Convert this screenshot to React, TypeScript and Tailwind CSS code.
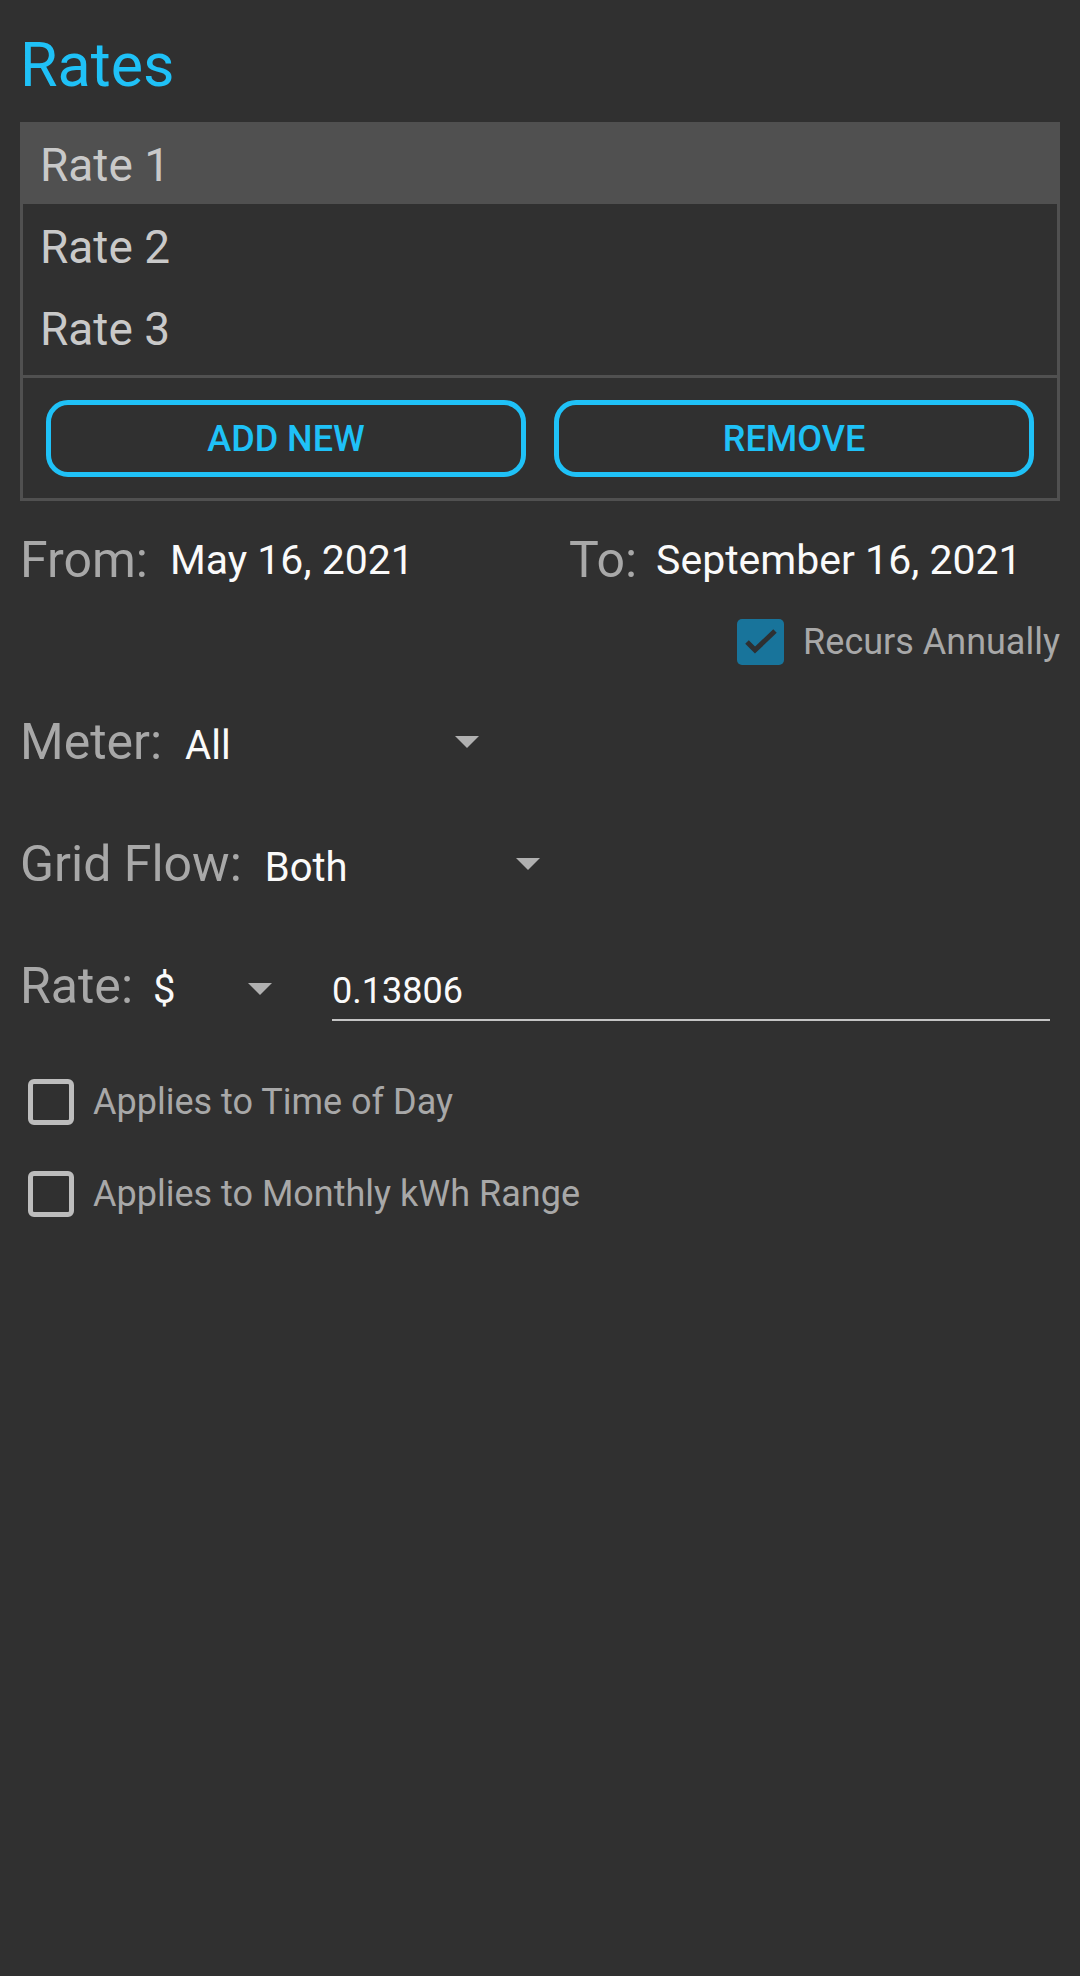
import React from "react";

const DropArrow = () => (
  <svg width="24" height="12" viewBox="0 0 24 12" className="shrink-0 self-center">
    <path d="M0 0 L24 0 L12 12 Z" fill="#b0b0b0" />
  </svg>
);

const CheckBox = ({ checked }: { checked: boolean }) => {
  if (checked) {
    return (
      <div className="flex h-[46px] w-[47px] shrink-0 items-center justify-center rounded-[5px] bg-[#18749b]">
        <svg width="47" height="46" viewBox="0 0 47 46">
          <polyline
            points="10,23 18,31 38,12"
            fill="none"
            stroke="#2e3032"
            strokeWidth="5"
          />
        </svg>
      </div>
    );
  }
  return (
    <div className="h-[46px] w-[46px] shrink-0 rounded-[6px] border-[5px] border-[#bdbdbd]" />
  );
};

const rates = ["Rate 1", "Rate 2", "Rate 3"];

export default function App() {
  return (
    <div className="flex h-[1976px] w-full flex-col bg-[#303030] px-[20px] font-['Roboto',sans-serif]">
      {/* title */}
      <div className="pt-[34px] text-[61px] leading-[62px] text-[#1fc1f7]">Rates</div>

      {/* rate list */}
      <div className="mt-[26px] flex flex-col border-x-[3px] border-b-[3px] border-[#505050]">
        <div className="flex flex-col pb-[7px]">
          {rates.map((r, i) => (
            <div
              key={r}
              className={
                "flex h-[82px] items-center pl-[17px] pt-[4px] text-[46px] leading-none text-[#c9c9c9] " +
                (i === 0 ? "bg-[#505050]" : "")
              }
            >
              {r}
            </div>
          ))}
        </div>
        <div className="h-[3px] bg-[#505050]" />
        <div className="flex gap-[28px] px-[23px] pb-[21px] pt-[22px]">
          <button className="flex h-[77px] flex-1 items-center justify-center rounded-[22px] border-[5px] border-[#1fc1f7] text-[36px] font-medium text-[#1fc1f7]">
            ADD NEW
          </button>
          <button className="flex h-[77px] flex-1 items-center justify-center rounded-[22px] border-[5px] border-[#1fc1f7] text-[36px] font-medium text-[#1fc1f7]">
            REMOVE
          </button>
        </div>
      </div>

      {/* dates */}
      <div className="mt-[30px] flex items-center">
        <div className="flex w-[549px] items-center">
          <span className="text-[50px] leading-[normal] text-[#a8a8a8]">From:</span>
          <span className="ml-[22px] text-[41px] leading-[normal] text-[#fafafa]">May 16, 2021</span>
        </div>
        <div className="flex items-center">
          <span className="text-[50px] leading-[normal] text-[#a8a8a8]">To:</span>
          <span className="ml-[19px] text-[41px] leading-[normal] text-[#fafafa]">September 16, 2021</span>
        </div>
      </div>

      <div className="mt-[30px] flex items-center justify-end">
        <CheckBox checked />
        <span className="ml-[19px] text-[36px] leading-[normal] text-[#a8a8a8]">Recurs Annually</span>
      </div>

      {/* meter */}
      <div className="mt-[48px] flex items-baseline">
        <span className="text-[50px] leading-[normal] text-[#a8a8a8]">Meter:</span>
        <span className="ml-[23px] w-[270px] text-[40px] leading-[normal] text-[#fafafa]">All</span>
        <DropArrow />
      </div>

      {/* grid flow */}
      <div className="mt-[64px] flex items-baseline">
        <span className="text-[50px] leading-[normal] text-[#a8a8a8]">Grid Flow:</span>
        <span className="ml-[23px] w-[251px] text-[40px] leading-[normal] text-[#fafafa]">Both</span>
        <DropArrow />
      </div>

      {/* rate */}
      <div className="mt-[64px] flex items-baseline">
        <span className="text-[50px] leading-[normal] text-[#a8a8a8]">Rate:</span>
        <span className="ml-[20px] w-[95px] text-[40px] leading-[normal] text-[#fafafa]">$</span>
        <DropArrow />
        <div className="ml-[60px] mr-[10px] flex-1 border-b-2 border-[#c4c4c4] pb-[7px] text-[36px] leading-[normal] text-[#fafafa]">
          0.13806
        </div>
      </div>

      {/* toggles */}
      <div className="ml-[8px] mt-[58px] flex items-center">
        <CheckBox checked={false} />
        <span className="ml-[19px] text-[36px] leading-[normal] text-[#a8a8a8]">Applies to Time of Day</span>
      </div>
      <div className="ml-[8px] mt-[46px] flex items-center">
        <CheckBox checked={false} />
        <span className="ml-[19px] text-[36px] leading-[normal] text-[#a8a8a8]">Applies to Monthly kWh Range</span>
      </div>
    </div>
  );
}
